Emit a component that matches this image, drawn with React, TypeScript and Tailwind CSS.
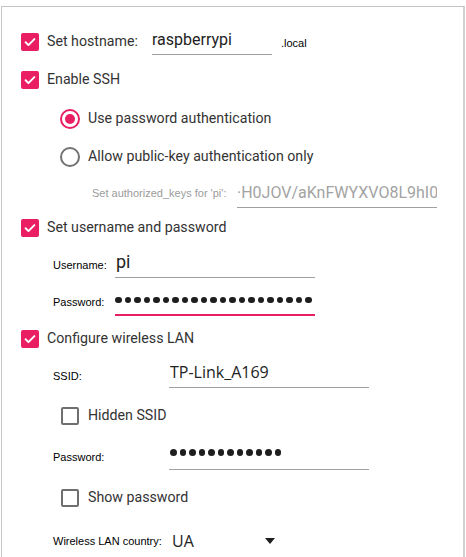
import React from "react";

function CheckOn() {
  return (
    <span className="flex h-[18px] w-[18px] shrink-0 items-center justify-center rounded-[2px] bg-[#e91e63]">
      <svg width="14" height="14" viewBox="0 0 24 24">
        <path d="M4.5 12.5l4.8 4.8L19.5 7" fill="none" stroke="#fff" strokeWidth="3.4" strokeLinecap="round" strokeLinejoin="round" />
      </svg>
    </span>
  );
}

function CheckOff() {
  return <span className="block h-[18px] w-[18px] shrink-0 rounded-[2px] border-2 border-[#6f6f6f]" />;
}

function RadioOn() {
  return (
    <span className="flex h-[20px] w-[20px] shrink-0 items-center justify-center rounded-full border-2 border-[#e91e63]">
      <span className="block h-[10px] w-[10px] rounded-full bg-[#e91e63]" />
    </span>
  );
}

function RadioOff() {
  return <span className="block h-[20px] w-[20px] shrink-0 rounded-full border-2 border-[#727272]" />;
}

function Dots({ n }: { n: number }) {
  return (
    <div className="flex gap-[3px]">
      {Array.from({ length: n }).map((_, i) => (
        <span key={i} className="block h-[6.5px] w-[6.5px] rounded-full bg-[#1e1e1e]" />
      ))}
    </div>
  );
}

const main = "font-['Roboto',sans-serif] text-[14.2px] text-[#333333]";
const small = "font-['Liberation_Sans',Arial,sans-serif] text-[11px]";

export default function App() {
  return (
    <div className="h-[557px] w-[466px] overflow-hidden bg-white">
      <div className="ml-[1px] mt-[6px] h-[600px] w-[464px] border-l border-r-2 border-t border-l-[#c9c9c9] border-r-[#d2d2d2] border-t-[#c4c4c4] pl-[19px] pt-[16px]">
        {/* hostname */}
        <div className="flex h-[38px] items-center">
          <CheckOn />
          <span className={`${main} ml-[8px] w-[105px]`}>Set hostname:</span>
          <div className="flex h-[26px] w-[120px] items-start border-b border-[#9e9e9e] pt-[1px]">
            <span className="font-['Roboto',sans-serif] text-[16px] leading-[20px] text-[#222]">raspberrypi</span>
          </div>
          <span className={`${small} ml-[9px] mt-[2px] text-black`}>.local</span>
        </div>

        {/* ssh */}
        <div className="flex h-[38px] items-center">
          <CheckOn />
          <span className={`${main} ml-[8px]`}>Enable SSH</span>
        </div>
        <div className="flex h-[40px] items-center pl-[39px]">
          <RadioOn />
          <span className={`${main} ml-[8px]`}>Use password authentication</span>
        </div>
        <div className="flex h-[36px] items-center pl-[39px]">
          <RadioOff />
          <span className={`${main} ml-[8px]`}>Allow public-key authentication only</span>
        </div>
        <div className="flex h-[36px] items-center pl-[71px]">
          <span className={`${small} w-[145px] text-[#9b9b9b]`}>Set authorized_keys for 'pi':</span>
          <div className="flex h-[30px] w-[200px] items-center overflow-hidden border-b border-[#a0a0a0]">
            <span className="whitespace-nowrap font-['Roboto',sans-serif] text-[16px] text-[#a3a3a3]">·H0JOV/aKnFWYXVO8L9hI0</span>
          </div>
        </div>

        {/* user */}
        <div className="flex h-[34px] items-center">
          <CheckOn />
          <span className={`${main} ml-[8px]`}>Set username and password</span>
        </div>
        <div className="flex h-[40px] items-center pl-[32px]">
          <span className={`${small} w-[62px] text-black`}>Username:</span>
          <div className="flex h-[26px] w-[200px] items-start border-b border-[#9e9e9e]">
            <span className="pl-[1px] font-['Roboto',sans-serif] text-[18px] leading-[20px] text-[#222]">pi</span>
          </div>
        </div>
        <div className="flex h-[34px] items-center pl-[32px]">
          <span className={`${small} w-[62px] text-black`}>Password:</span>
          <div className="mt-[1px] flex h-[27px] w-[200px] items-center border-b-2 border-[#e91e63] pb-[3px]">
            <Dots n={21} />
          </div>
        </div>

        {/* wifi */}
        <div className="flex h-[40px] items-center">
          <CheckOn />
          <span className={`${main} ml-[8px]`}>Configure wireless LAN</span>
        </div>
        <div className="flex h-[34px] items-center pl-[32px]">
          <span className={`${small} w-[116px] text-black`}>SSID:</span>
          <div className="mt-[-6px] flex h-[30px] w-[200px] items-center border-b border-[#a0a0a0] pb-[2px]">
            <span className="pl-[1px] font-['Open_Sans',sans-serif] text-[16px] text-[#222]">TP-Link_A169</span>
          </div>
        </div>
        <div className="flex h-[46px] items-center pl-[40px]">
          <CheckOff />
          <span className={`${main} ml-[9px]`}>Hidden SSID</span>
        </div>
        <div className="flex h-[36px] items-center pl-[32px]">
          <span className={`${small} w-[116px] text-black`}>Password:</span>
          <div className="mt-[-2px] flex h-[28px] w-[200px] items-center border-b border-[#a0a0a0] pb-[6px] pl-[1px]">
            <Dots n={12} />
          </div>
        </div>
        <div className="flex h-[46px] items-center pl-[40px]">
          <CheckOff />
          <span className={`${main} ml-[9px]`}>Show password</span>
        </div>
        <div className="flex h-[40px] items-center pl-[32px]">
          <span className={`${small} w-[119px] text-black`}>Wireless LAN country:</span>
          <div className="flex w-[103px] items-center justify-between">
            <span className="font-['Open_Sans',sans-serif] text-[16px] text-[#222]">UA</span>
            <svg width="10" height="6" viewBox="0 0 10 6">
              <path d="M0 0h10L5 6z" fill="#1e1e1e" />
            </svg>
          </div>
        </div>
      </div>
    </div>
  );
}
